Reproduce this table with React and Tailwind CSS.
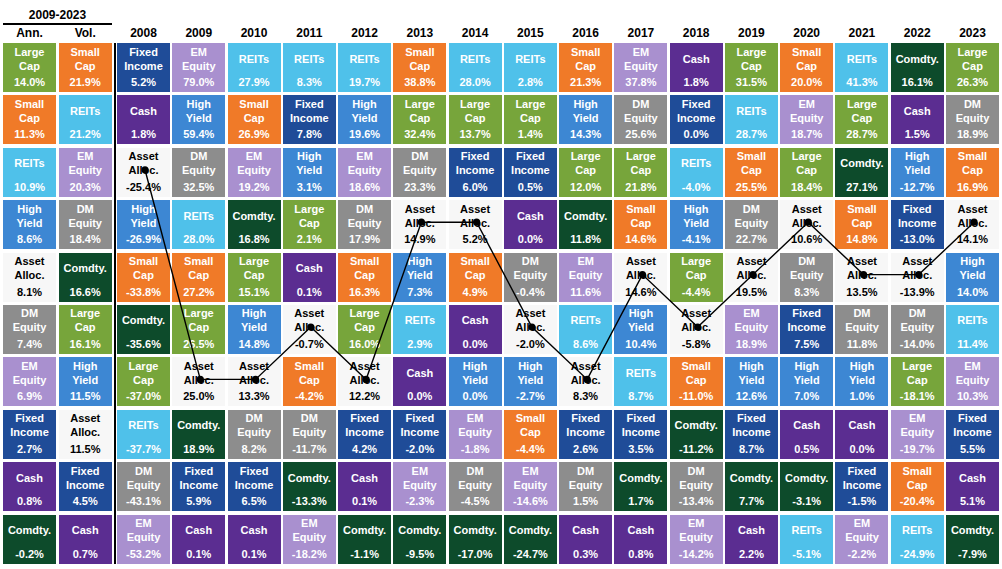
import React from 'react';

const COLORS = {
  'Large Cap': 'bg-[#77a53b] text-white',
  'Small Cap': 'bg-[#f07a28] text-white',
  REITs: 'bg-[#4fc1ea] text-white',
  'High Yield': 'bg-[#3d87d3] text-white',
  'DM Equity': 'bg-[#8d8d8d] text-white',
  'EM Equity': 'bg-[#a990cf] text-white',
  'Fixed Income': 'bg-[#1f4c98] text-white',
  Cash: 'bg-[#5b2d91] text-white',
  'Comdty.': 'bg-[#0d4b2b] text-white',
  'Asset Alloc.': 'bg-[#f7f7f7] text-black',
};

// label split into display lines
const LINES = {
  'Large Cap': ['Large', 'Cap'],
  'Small Cap': ['Small', 'Cap'],
  REITs: ['REITs'],
  'High Yield': ['High', 'Yield'],
  'DM Equity': ['DM', 'Equity'],
  'EM Equity': ['EM', 'Equity'],
  'Fixed Income': ['Fixed', 'Income'],
  Cash: ['Cash'],
  'Comdty.': ['Comdty.'],
  'Asset Alloc.': ['Asset', 'Alloc.'],
};

const LC = 'Large Cap', SC = 'Small Cap', RE = 'REITs', HY = 'High Yield', DM = 'DM Equity';
const EM = 'EM Equity', FI = 'Fixed Income', CA = 'Cash', CO = 'Comdty.', AA = 'Asset Alloc.';

const summary = [
  [[LC, '14.0%'], [SC, '21.9%']],
  [[SC, '11.3%'], [RE, '21.2%']],
  [[RE, '10.9%'], [EM, '20.3%']],
  [[HY, '8.6%'], [DM, '18.4%']],
  [[AA, '8.1%'], [CO, '16.6%']],
  [[DM, '7.4%'], [LC, '16.1%']],
  [[EM, '6.9%'], [HY, '11.5%']],
  [[FI, '2.7%'], [AA, '11.5%']],
  [[CA, '0.8%'], [FI, '4.5%']],
  [[CO, '-0.2%'], [CA, '0.7%']],
];

const years = ['2008', '2009', '2010', '2011', '2012', '2013', '2014', '2015', '2016', '2017', '2018', '2019', '2020', '2021', '2022', '2023'];

const rows = [
  [[FI, '5.2%'], [EM, '79.0%'], [RE, '27.9%'], [RE, '8.3%'], [RE, '19.7%'], [SC, '38.8%'], [RE, '28.0%'], [RE, '2.8%'], [SC, '21.3%'], [EM, '37.8%'], [CA, '1.8%'], [LC, '31.5%'], [SC, '20.0%'], [RE, '41.3%'], [CO, '16.1%'], [LC, '26.3%']],
  [[CA, '1.8%'], [HY, '59.4%'], [SC, '26.9%'], [FI, '7.8%'], [HY, '19.6%'], [LC, '32.4%'], [LC, '13.7%'], [LC, '1.4%'], [HY, '14.3%'], [DM, '25.6%'], [FI, '0.0%'], [RE, '28.7%'], [EM, '18.7%'], [LC, '28.7%'], [CA, '1.5%'], [DM, '18.9%']],
  [[AA, '-25.4%'], [DM, '32.5%'], [EM, '19.2%'], [HY, '3.1%'], [EM, '18.6%'], [DM, '23.3%'], [FI, '6.0%'], [FI, '0.5%'], [LC, '12.0%'], [LC, '21.8%'], [RE, '-4.0%'], [SC, '25.5%'], [LC, '18.4%'], [CO, '27.1%'], [HY, '-12.7%'], [SC, '16.9%']],
  [[HY, '-26.9%'], [RE, '28.0%'], [CO, '16.8%'], [LC, '2.1%'], [DM, '17.9%'], [AA, '14.9%'], [AA, '5.2%'], [CA, '0.0%'], [CO, '11.8%'], [SC, '14.6%'], [HY, '-4.1%'], [DM, '22.7%'], [AA, '10.6%'], [SC, '14.8%'], [FI, '-13.0%'], [AA, '14.1%']],
  [[SC, '-33.8%'], [SC, '27.2%'], [LC, '15.1%'], [CA, '0.1%'], [SC, '16.3%'], [HY, '7.3%'], [SC, '4.9%'], [DM, '-0.4%'], [EM, '11.6%'], [AA, '14.6%'], [LC, '-4.4%'], [AA, '19.5%'], [DM, '8.3%'], [AA, '13.5%'], [AA, '-13.9%'], [HY, '14.0%']],
  [[CO, '-35.6%'], [LC, '26.5%'], [HY, '14.8%'], [AA, '-0.7%'], [LC, '16.0%'], [RE, '2.9%'], [CA, '0.0%'], [AA, '-2.0%'], [RE, '8.6%'], [HY, '10.4%'], [AA, '-5.8%'], [EM, '18.9%'], [FI, '7.5%'], [DM, '11.8%'], [DM, '-14.0%'], [RE, '11.4%']],
  [[LC, '-37.0%'], [AA, '25.0%'], [AA, '13.3%'], [SC, '-4.2%'], [AA, '12.2%'], [CA, '0.0%'], [HY, '0.0%'], [HY, '-2.7%'], [AA, '8.3%'], [RE, '8.7%'], [SC, '-11.0%'], [HY, '12.6%'], [HY, '7.0%'], [HY, '1.0%'], [LC, '-18.1%'], [EM, '10.3%']],
  [[RE, '-37.7%'], [CO, '18.9%'], [DM, '8.2%'], [DM, '-11.7%'], [FI, '4.2%'], [FI, '-2.0%'], [EM, '-1.8%'], [SC, '-4.4%'], [FI, '2.6%'], [FI, '3.5%'], [CO, '-11.2%'], [FI, '8.7%'], [CA, '0.5%'], [CA, '0.0%'], [EM, '-19.7%'], [FI, '5.5%']],
  [[DM, '-43.1%'], [FI, '5.9%'], [FI, '6.5%'], [CO, '-13.3%'], [CA, '0.1%'], [EM, '-2.3%'], [DM, '-4.5%'], [EM, '-14.6%'], [DM, '1.5%'], [CO, '1.7%'], [DM, '-13.4%'], [CO, '7.7%'], [CO, '-3.1%'], [FI, '-1.5%'], [SC, '-20.4%'], [CA, '5.1%']],
  [[EM, '-53.2%'], [CA, '0.1%'], [CA, '0.1%'], [EM, '-18.2%'], [CO, '-1.1%'], [CO, '-9.5%'], [CO, '-17.0%'], [CO, '-24.7%'], [CA, '0.3%'], [CA, '0.8%'], [EM, '-14.2%'], [CA, '2.2%'], [RE, '-5.1%'], [EM, '-2.2%'], [RE, '-24.9%'], [CO, '-7.9%']],
];

const COL_W = 53;
const COL_GAP = 2.27;
const ROW_H = 49;
const ROW_GAP = 3.4;

function Cell({ name, value }) {
  return (
    <div className={`h-[49px] flex flex-col items-center text-[11px] font-bold leading-[14px] ${COLORS[name]}`}>
      <div className="h-[31px] flex flex-col items-center justify-center">
        {LINES[name].map((l) => (
          <span key={l}>{l}</span>
        ))}
      </div>
      <div className="mt-[1px]">{value}</div>
    </div>
  );
}

function AllocLine() {
  const pts = years.map((_, c) => {
    const r = rows.findIndex((row) => row[c][0] === AA);
    return [c * (COL_W + COL_GAP) + 28, r * (ROW_H + ROW_GAP) + 22];
  });
  return (
    <svg className="absolute inset-0 pointer-events-none" width="882" height="521">
      <polyline
        points={pts.map((p) => p.join(',')).join(' ')}
        fill="none"
        stroke="#000"
        strokeWidth="1.4"
      />
      {pts.map(([x, y], i) => (
        <circle key={i} cx={x} cy={y} r="3.6" fill="#000" />
      ))}
    </svg>
  );
}

export default function App() {
  return (
    <div className="w-[1002px] h-[569px] bg-white overflow-hidden font-['Liberation_Sans',Arial,sans-serif]">
      <div className="flex pl-[3px]">
        {/* summary columns */}
        <div className="w-[109px]">
          <div className="h-[23px] pt-[8px] text-center text-[12px] font-bold leading-[14px] text-black">2009-2023</div>
          <div className="h-[2px] bg-black"></div>
          <div className="h-[18px] pt-[1px] grid grid-cols-[53px_53px] gap-x-[2.7px] text-center text-[12px] font-bold leading-[14px] text-black">
            <div>Ann.</div>
            <div>Vol.</div>
          </div>
          <div className="grid grid-cols-[53px_53px] gap-x-[2.7px] gap-y-[3.4px]">
            {summary.map((row, r) =>
              row.map(([n, v], c) => <Cell key={`${r}-${c}`} name={n} value={v} />)
            )}
          </div>
        </div>

        {/* divider */}
        <div className="ml-[2px] mt-[43px] w-[2px] h-[521px] bg-black"></div>

        {/* yearly columns */}
        <div className="ml-[1px] w-[882px]">
          <div className="h-[43px] pt-[26px] grid grid-cols-[repeat(16,53px)] gap-x-[2.27px] text-center text-[12px] font-bold leading-[14px] text-black">
            {years.map((y) => (
              <div key={y}>{y}</div>
            ))}
          </div>
          <div className="relative">
            <div className="grid grid-cols-[repeat(16,53px)] gap-x-[2.27px] gap-y-[3.4px]">
              {rows.map((row, r) =>
                row.map(([n, v], c) => <Cell key={`${r}-${c}`} name={n} value={v} />)
              )}
            </div>
            <AllocLine />
          </div>
        </div>
      </div>
    </div>
  );
}
